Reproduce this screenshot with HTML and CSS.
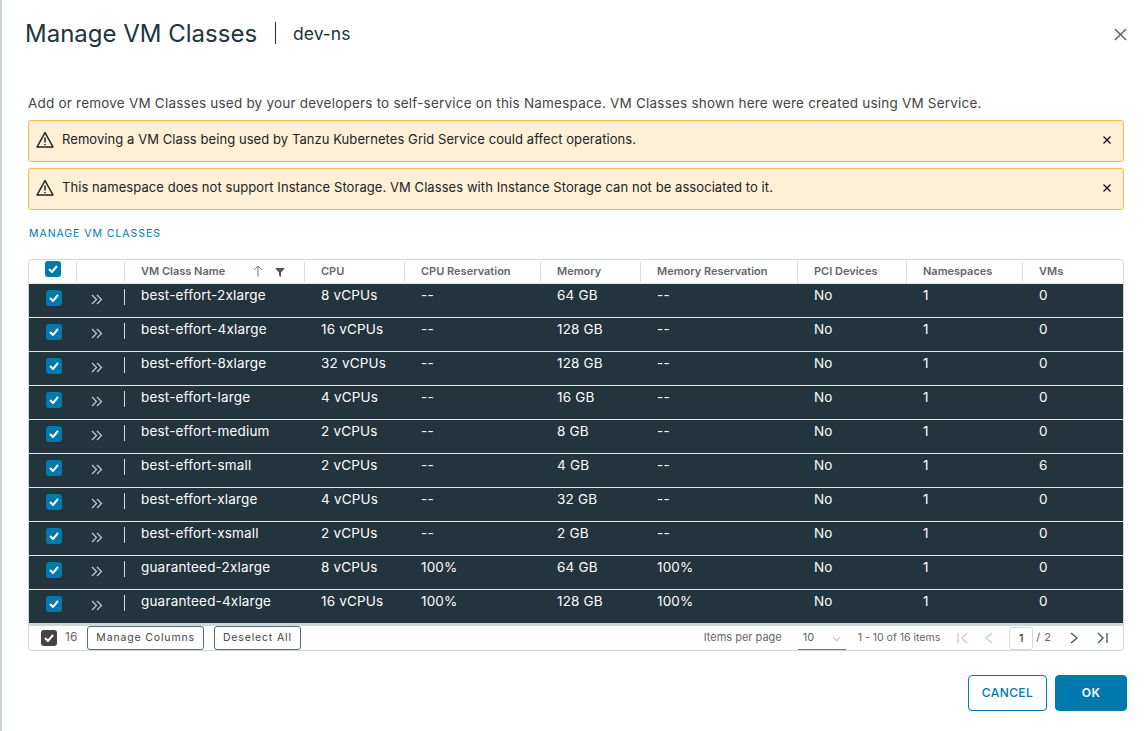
FILE: index.html
```html
<!DOCTYPE html>
<html lang="en">
<head>
  <meta charset="UTF-8">
  <title>Manage VM Classes</title>
  <link rel="stylesheet" href="styles.css">
</head>
<body>
  <div class="modal">
    <div class="modal-header">
      <h1>Manage VM Classes</h1>
      <span class="subtitle">dev-ns</span>
      <svg class="close-icon" viewBox="0 0 14 14"><path d="M1 1l12 12M13 1L1 13"/></svg>
    </div>

    <p class="intro">Add or remove VM Classes used by your developers to self-service on this Namespace. VM Classes shown here were created using VM Service.</p>

    <div class="alert">
      <svg class="warn-icon" viewBox="0 0 18 18"><path d="M9 1.6L1 16h16z"/><path d="M9 6.500v5M9 13v1.300"/></svg>
      <span>Removing a VM Class being used by Tanzu Kubernetes Grid Service could affect operations.</span>
      <svg class="alert-close" viewBox="0 0 8 8"><path d="M.5.5l7 7M7.500.5l-7 7"/></svg>
    </div>
    <div class="alert">
      <svg class="warn-icon" viewBox="0 0 18 18"><path d="M9 1.6L1 16h16z"/><path d="M9 6.500v5M9 13v1.300"/></svg>
      <span>This namespace does not support Instance Storage. VM Classes with Instance Storage can not be associated to it.</span>
      <svg class="alert-close" viewBox="0 0 8 8"><path d="M.5.5l7 7M7.500.5l-7 7"/></svg>
    </div>

    <a class="manage-link">MANAGE VM CLASSES</a>

    <div class="datagrid">
      <div class="row head">
        <div class="cell check-cell"><span class="check"><svg viewBox="0 0 10 8"><path d="M1 4l3 3 5-6"/></svg></span></div>
        <div class="cell"></div>
        <div class="cell name-head">VM Class Name
          <svg class="sort-icon" viewBox="0 0 10 12"><path d="M5 11.500V1M1 5l4-4 4 4"/></svg>
          <svg class="filter-icon" viewBox="0 0 10 10"><path d="M0 1h10L6 5.500V10L4 8.500V5.500z"/></svg>
        </div>
        <div class="cell">CPU</div>
        <div class="cell">CPU Reservation</div>
        <div class="cell">Memory</div>
        <div class="cell">Memory Reservation</div>
        <div class="cell">PCI Devices</div>
        <div class="cell">Namespaces</div>
        <div class="cell">VMs</div>
      </div>

      <div class="row item">
        <div class="cell check-cell"><span class="check"><svg viewBox="0 0 10 8"><path d="M1 4l3 3 5-6"/></svg></span></div>
        <div class="cell expand-cell"><svg viewBox="0 0 12 11"><path d="M1 1l4.500 4.500L1 10M6 1l4.500 4.500L6 10"/></svg></div>
        <div class="cell">best-effort-2xlarge</div><div class="cell">8 vCPUs</div><div class="cell">--</div><div class="cell">64 GB</div><div class="cell">--</div><div class="cell">No</div><div class="cell">1</div><div class="cell">0</div>
      </div>
      <div class="row item">
        <div class="cell check-cell"><span class="check"><svg viewBox="0 0 10 8"><path d="M1 4l3 3 5-6"/></svg></span></div>
        <div class="cell expand-cell"><svg viewBox="0 0 12 11"><path d="M1 1l4.500 4.500L1 10M6 1l4.500 4.500L6 10"/></svg></div>
        <div class="cell">best-effort-4xlarge</div><div class="cell">16 vCPUs</div><div class="cell">--</div><div class="cell">128 GB</div><div class="cell">--</div><div class="cell">No</div><div class="cell">1</div><div class="cell">0</div>
      </div>
      <div class="row item">
        <div class="cell check-cell"><span class="check"><svg viewBox="0 0 10 8"><path d="M1 4l3 3 5-6"/></svg></span></div>
        <div class="cell expand-cell"><svg viewBox="0 0 12 11"><path d="M1 1l4.500 4.500L1 10M6 1l4.500 4.500L6 10"/></svg></div>
        <div class="cell">best-effort-8xlarge</div><div class="cell">32 vCPUs</div><div class="cell">--</div><div class="cell">128 GB</div><div class="cell">--</div><div class="cell">No</div><div class="cell">1</div><div class="cell">0</div>
      </div>
      <div class="row item">
        <div class="cell check-cell"><span class="check"><svg viewBox="0 0 10 8"><path d="M1 4l3 3 5-6"/></svg></span></div>
        <div class="cell expand-cell"><svg viewBox="0 0 12 11"><path d="M1 1l4.500 4.500L1 10M6 1l4.500 4.500L6 10"/></svg></div>
        <div class="cell">best-effort-large</div><div class="cell">4 vCPUs</div><div class="cell">--</div><div class="cell">16 GB</div><div class="cell">--</div><div class="cell">No</div><div class="cell">1</div><div class="cell">0</div>
      </div>
      <div class="row item">
        <div class="cell check-cell"><span class="check"><svg viewBox="0 0 10 8"><path d="M1 4l3 3 5-6"/></svg></span></div>
        <div class="cell expand-cell"><svg viewBox="0 0 12 11"><path d="M1 1l4.500 4.500L1 10M6 1l4.500 4.500L6 10"/></svg></div>
        <div class="cell">best-effort-medium</div><div class="cell">2 vCPUs</div><div class="cell">--</div><div class="cell">8 GB</div><div class="cell">--</div><div class="cell">No</div><div class="cell">1</div><div class="cell">0</div>
      </div>
      <div class="row item">
        <div class="cell check-cell"><span class="check"><svg viewBox="0 0 10 8"><path d="M1 4l3 3 5-6"/></svg></span></div>
        <div class="cell expand-cell"><svg viewBox="0 0 12 11"><path d="M1 1l4.500 4.500L1 10M6 1l4.500 4.500L6 10"/></svg></div>
        <div class="cell">best-effort-small</div><div class="cell">2 vCPUs</div><div class="cell">--</div><div class="cell">4 GB</div><div class="cell">--</div><div class="cell">No</div><div class="cell">1</div><div class="cell">6</div>
      </div>
      <div class="row item">
        <div class="cell check-cell"><span class="check"><svg viewBox="0 0 10 8"><path d="M1 4l3 3 5-6"/></svg></span></div>
        <div class="cell expand-cell"><svg viewBox="0 0 12 11"><path d="M1 1l4.500 4.500L1 10M6 1l4.500 4.500L6 10"/></svg></div>
        <div class="cell">best-effort-xlarge</div><div class="cell">4 vCPUs</div><div class="cell">--</div><div class="cell">32 GB</div><div class="cell">--</div><div class="cell">No</div><div class="cell">1</div><div class="cell">0</div>
      </div>
      <div class="row item">
        <div class="cell check-cell"><span class="check"><svg viewBox="0 0 10 8"><path d="M1 4l3 3 5-6"/></svg></span></div>
        <div class="cell expand-cell"><svg viewBox="0 0 12 11"><path d="M1 1l4.500 4.500L1 10M6 1l4.500 4.500L6 10"/></svg></div>
        <div class="cell">best-effort-xsmall</div><div class="cell">2 vCPUs</div><div class="cell">--</div><div class="cell">2 GB</div><div class="cell">--</div><div class="cell">No</div><div class="cell">1</div><div class="cell">0</div>
      </div>
      <div class="row item">
        <div class="cell check-cell"><span class="check"><svg viewBox="0 0 10 8"><path d="M1 4l3 3 5-6"/></svg></span></div>
        <div class="cell expand-cell"><svg viewBox="0 0 12 11"><path d="M1 1l4.500 4.500L1 10M6 1l4.500 4.500L6 10"/></svg></div>
        <div class="cell">guaranteed-2xlarge</div><div class="cell">8 vCPUs</div><div class="cell">100%</div><div class="cell">64 GB</div><div class="cell">100%</div><div class="cell">No</div><div class="cell">1</div><div class="cell">0</div>
      </div>
      <div class="row item">
        <div class="cell check-cell"><span class="check"><svg viewBox="0 0 10 8"><path d="M1 4l3 3 5-6"/></svg></span></div>
        <div class="cell expand-cell"><svg viewBox="0 0 12 11"><path d="M1 1l4.500 4.500L1 10M6 1l4.500 4.500L6 10"/></svg></div>
        <div class="cell">guaranteed-4xlarge</div><div class="cell">16 vCPUs</div><div class="cell">100%</div><div class="cell">128 GB</div><div class="cell">100%</div><div class="cell">No</div><div class="cell">1</div><div class="cell">0</div>
      </div>

      <div class="grid-footer">
        <span class="check dark"><svg viewBox="0 0 10 8"><path d="M1 4l3 3 5-6"/></svg></span>
        <span class="count">16</span>
        <button class="small-btn">Manage Columns</button>
        <button class="small-btn">Deselect All</button>
        <span class="per-page-label">Items per page</span>
        <span class="per-page">10<svg viewBox="0 0 10 6"><path d="M1 1l4 4 4-4"/></svg></span>
        <span class="range">1 - 10 of 16 items</span>
        <svg class="pager-icon muted first" viewBox="0 0 12 12"><path d="M1 1v10M10 1L5 6l5 5"/></svg>
        <svg class="pager-icon muted prev" viewBox="0 0 12 12"><path d="M10 1L4 6l6 5"/></svg>
        <span class="page-box">1</span>
        <span class="page-total">/ 2</span>
        <svg class="pager-icon next" viewBox="0 0 12 12"><path d="M3 1l6 5-6 5"/></svg>
        <svg class="pager-icon last" viewBox="0 0 12 12"><path d="M11 1v10M2 1l5 5-5 5"/></svg>
      </div>
    </div>

    <div class="modal-footer">
      <button class="btn btn-outline">CANCEL</button>
      <button class="btn btn-primary">OK</button>
    </div>
  </div>
</body>
</html>
```

FILE: styles.css
```css
* {
  box-sizing: border-box;
}
body {
  margin: 0;
  height: 731px;
  overflow: hidden;
  background: #fff;
  font-family: Inter, 'Open Sans', sans-serif;
  color: #333;
}
svg {
  display: block;
  fill: none;
}
.modal {
  height: 731px;
  padding: 0 22px 0 26px;
  border-left: 2px solid #c9d4d9;
}
.modal-header {
  display: flex;
  align-items: center;
  height: 66px;
  color: #22343c;
}
.modal-header h1 {
  margin: 0 0 0 -3px;
  padding: 2px 18px 0 0;
  border-right: 1px solid #22343c;
  font-size: 24px;
  font-weight: 400;
  line-height: 20px;
}
.subtitle {
  flex: 1;
  margin-left: 17px;
  font-size: 17.500px;
}
.close-icon {
  width: 13px;
  height: 13px;
  margin: 2px -3px 0 0;
  stroke: #4a626e;
  stroke-width: 1.500;
}
.intro {
  margin: 28px 0 8px;
  font-size: 13.500px;
  line-height: 18px;
  letter-spacing: 0.21px;
  color: #444;
}
.alert {
  display: flex;
  align-items: center;
  height: 42px;
  margin-bottom: 6px;
  padding: 0 12px 2px 7px;
  background: #feefd7;
  border: 1px solid #fdb945;
  border-radius: 3px;
  font-size: 13px;
  letter-spacing: 0.07px;
  color: #222;
}
.alert span {
  flex: 1;
  margin-left: 8px;
  padding-bottom: 2px;
}
.warn-icon {
  width: 18px;
  height: 18px;
  stroke: #222;
  stroke-width: 1.500;
  stroke-linejoin: round;
}
.alert-close {
  width: 8px;
  height: 8px;
  stroke: #111;
  stroke-width: 1.300;
}
.manage-link {
  display: block;
  margin: 17px 0 18px 1px;
  font-size: 10.500px;
  line-height: 14px;
  letter-spacing: 0.95px;
  color: #0079ad;
}
.datagrid {
  width: 1096px;
  border: 1px solid #ccd6db;
  border-radius: 4px;
  overflow: hidden;
}
.row {
  display: grid;
  grid-template-columns: 47px 48px 180px 100px 136px 100px 157px 109px 116px 1fr;
}
.head {
  height: 23px;
  font-size: 11px;
  font-weight: 600;
  color: #666;
}
.head .cell {
  height: 20px;
  margin-top: 2px;
  padding-left: 16px;
  border-left: 1px solid #ddd;
  line-height: 18px;
}
.head .check-cell {
  border-left: 0;
}
.head .check {
  margin-top: -1px;
}
.name-head {
  display: flex;
  align-items: flex-start;
}
.sort-icon {
  width: 10px;
  height: 12px;
  margin: 3px 0 0 28px;
  stroke: #777;
  stroke-width: 1;
}
.filter-icon {
  width: 10px;
  height: 10px;
  margin: 5px 0 0 12px;
  fill: #555;
}
.item {
  height: 34px;
  background: #22343c;
  border-top: 1px solid #e3e8ea;
  color: #fff;
  font-size: 13.500px;
  letter-spacing: 0.18px;
}
.item .cell {
  padding: 2px 0 0 17px;
  line-height: 18px;
}
.item .check-cell {
  padding: 6px 0 0 17px;
}
.item .expand-cell {
  padding: 10px 0 0 15px;
}
.expand-cell svg {
  width: 12px;
  height: 11px;
  stroke: #c5d0d5;
  stroke-width: 1.200;
}
.item .cell:nth-child(3) {
  position: relative;
}
.item .cell:nth-child(3)::before {
  content: "";
  position: absolute;
  left: 0;
  top: 5px;
  height: 16px;
  border-left: 1px solid #d5dadd;
}
.check {
  display: flex;
  align-items: center;
  justify-content: center;
  width: 16px;
  height: 16px;
  background: #0079ad;
  border-radius: 3px;
}
.check svg {
  width: 10px;
  height: 8px;
  stroke: #fff;
  stroke-width: 2;
}
.check.dark {
  background: #444;
}
.grid-footer {
  display: flex;
  align-items: center;
  height: 27px;
  padding-left: 12px;
  border-top: 3px solid #ccd6db;
  font-size: 11px;
  color: #666;
}
.count {
  margin: 0 0 3px 8px;
  font-size: 12px;
}
.small-btn {
  height: 24px;
  margin-left: 10px;
  padding: 0 8px 2px;
  background: #fff;
  border: 1px solid #5b6e78;
  border-radius: 3px;
  font-family: inherit;
  font-size: 10.500px;
  letter-spacing: 0.85px;
  color: #444;
}
.per-page-label {
  margin: 0 0 2px auto;
}
.per-page {
  display: flex;
  justify-content: space-between;
  align-items: center;
  width: 48px;
  height: 24px;
  margin-left: 16px;
  padding: 0 5px 2px;
  border-bottom: 1px solid #6c7b83;
}
.per-page svg {
  width: 9px;
  height: 6px;
  margin-top: 4px;
  stroke: #999;
  stroke-width: 1;
}
.range {
  margin: 0 0 2px 12px;
  font-size: 10.500px;
}
.pager-icon {
  width: 12px;
  height: 12px;
  stroke: #3d525c;
  stroke-width: 1.300;
}
.pager-icon.muted {
  stroke: #c5cdd1;
}
.first {
  margin-left: 17px;
}
.prev {
  margin-left: 13px;
}
.page-box {
  width: 24px;
  height: 23px;
  margin-left: 15px;
  border: 1px solid #d5dadd;
  border-radius: 3px;
  text-align: center;
  line-height: 20px;
  color: #222;
}
.page-total {
  margin: 0 0 2px 3px;
  word-spacing: 1px;
}
.next {
  margin-left: 17px;
}
.last {
  margin-left: 16px;
  margin-right: 15px;
}
.modal-footer {
  display: flex;
  justify-content: flex-end;
  gap: 8px;
  margin: 24px -3px 0 0;
}
.btn {
  width: 79px;
  height: 36px;
  padding-bottom: 3px;
  border-radius: 4px;
  font-family: inherit;
  font-size: 12px;
  font-weight: 600;
  letter-spacing: 0.4px;
}
.btn-outline {
  background: #fff;
  border: 1px solid #0079ad;
  color: #0079ad;
  font-weight: 500;
}
.btn-primary {
  width: 72px;
  background: #0079ad;
  border: 1px solid #0079ad;
  color: #fff;
}
```
